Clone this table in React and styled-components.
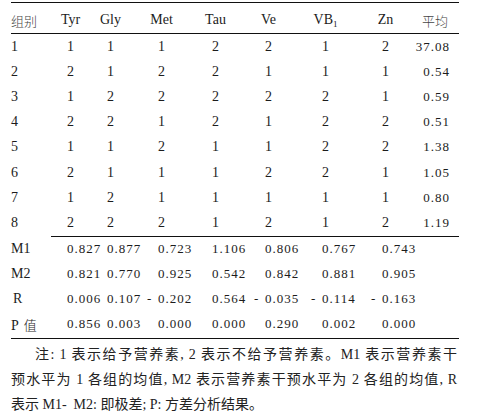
import React from "react";
import styled, { createGlobalStyle } from "styled-components";

const Global = createGlobalStyle`
  html, body { margin: 0; padding: 0; background: #fff; }
  body { font-family: "Liberation Serif", "Noto Sans CJK SC", serif; color: #1c1c1c; }
`;

const COLS = "56px 40px 51px 54px 53px 57px 60px 37px 40px";

const Page = styled.div`
  padding: 2px 0 0 11px;
  width: 448px;
`;

const Table = styled.div`
  width: 448px;
  border-top: 1px solid #111;
  border-bottom: 1px solid #111;
  padding-bottom: 1px;
`;

const Row = styled.div`
  display: grid;
  grid-template-columns: ${COLS};
  align-items: center;
  box-sizing: border-box;
  height: ${(p) => p.$h}px;
`;

const HeadRow = styled(Row)`
  padding-top: 4px;
  border-bottom: 1px solid #111;
  font-size: 14px;
`;

const HeadCell = styled.div`
  width: 7px;
  display: flex;
  justify-content: center;
  white-space: nowrap;
`;

const GroupHead = styled.div`
  font-family: "Noto Sans CJK SC", sans-serif;
  font-size: 13px;
  color: #444;
  font-weight: 300;
`;

const AvgHead = styled.div`
  justify-self: end;
  padding-right: 11px;
  font-family: "Noto Sans CJK SC", sans-serif;
  font-size: 13px;
  color: #444;
  font-weight: 300;
  white-space: nowrap;
`;

const Cell = styled.div`
  font-size: ${(p) => (p.$dec ? 13 : 14)}px;
  letter-spacing: ${(p) => (p.$dec ? "1px" : "0")};
  white-space: nowrap;
`;

const Label = styled.div`
  font-size: 14px;
  padding-left: ${(p) => p.$pad || 0}px;
  white-space: nowrap;
`;

const PVal = styled.span`
  font-family: "Noto Sans CJK SC", sans-serif;
  font-size: 13px;
  font-weight: 300;
  margin-left: 5px;
`;

const AvgCell = styled.div`
  justify-self: end;
  padding-right: 9px;
  font-size: 13px;
  letter-spacing: 1px;
  white-space: nowrap;
`;

const Minus = styled.span`
  display: inline-block;
  width: 11px;
  margin-left: -11px;
`;

const Rule = styled.div`
  margin-left: 40px;
  border-top: 1px solid #111;
`;

const Note = styled.div`
  margin-top: 3px;
  width: 446px;
  font-size: 14px;
  line-height: 25px;
  color: #222;
`;

const NoteLine = styled.div`
  text-align: justify;
  text-align-last: ${(p) => (p.$last ? "auto" : "justify")};
  text-indent: ${(p) => p.$indent || 0}px;
  white-space: nowrap;
`;

const Sub = styled.sub`
  font-size: 9px;
  vertical-align: -3px;
`;

const rows = [
  ["1", 1, 1, 1, 2, 2, 1, 2, "37.08"],
  ["2", 2, 1, 2, 2, 1, 1, 1, "0.54"],
  ["3", 1, 2, 2, 2, 2, 2, 1, "0.59"],
  ["4", 2, 2, 1, 2, 1, 2, 2, "0.51"],
  ["5", 1, 1, 2, 1, 1, 2, 2, "1.38"],
  ["6", 2, 1, 1, 1, 2, 2, 1, "1.05"],
  ["7", 1, 2, 1, 1, 1, 1, 1, "0.80"],
  ["8", 2, 2, 2, 1, 2, 1, 2, "1.19"],
];

const mrows = [
  ["M1", 0, ["0.827", "0.877", "0.723", "1.106", "0.806", "0.767", "0.743"]],
  ["M2", 0, ["0.821", "0.770", "0.925", "0.542", "0.842", "0.881", "0.905"]],
  ["R", 2, ["0.006", "0.107", "-0.202", "0.564", "-0.035", "-0.114", "-0.163"]],
  ["P", 0, ["0.856", "0.003", "0.000", "0.000", "0.290", "0.002", "0.000"]],
];

const heads = ["Tyr", "Gly", "Met", "Tau", "Ve", "VB", "Zn"];

export default function App() {
  return (
    <Page>
      <Global />
      <Table>
        <HeadRow $h={31}>
          <GroupHead>组别</GroupHead>
          {heads.map((h) => (
            <HeadCell key={h}>
              <span>
                {h}
                {h === "VB" && <Sub>1</Sub>}
              </span>
            </HeadCell>
          ))}
          <AvgHead>平均</AvgHead>
        </HeadRow>
        {rows.map((r) => (
          <Row $h={25.2} key={r[0]}>
            <Label>{r[0]}</Label>
            {r.slice(1, 8).map((v, i) => (
              <Cell key={i}>{v}</Cell>
            ))}
            <AvgCell>{r[8]}</AvgCell>
          </Row>
        ))}
        <Rule />
        {mrows.map(([label, pad, vals]) => (
          <Row $h={25} key={label}>
            <Label $pad={pad}>
              {label}
              {label === "P" && <PVal>值</PVal>}
            </Label>
            {vals.map((v, i) => (
              <Cell $dec key={i}>
                {v.startsWith("-") ? (
                  <>
                    <Minus>-</Minus>
                    {v.slice(1)}
                  </>
                ) : (
                  v
                )}
              </Cell>
            ))}
            <div />
          </Row>
        ))}
      </Table>
      <Note>
        <NoteLine $indent={24}>注: 1 表示给予营养素, 2 表示不给予营养素。M1 表示营养素干</NoteLine>
        <NoteLine>预水平为 1 各组的均值, M2 表示营养素干预水平为 2 各组的均值, R</NoteLine>
        <NoteLine $last>表示 M1-&nbsp;&nbsp;M2: 即极差; P: 方差分析结果。</NoteLine>
      </Note>
    </Page>
  );
}
